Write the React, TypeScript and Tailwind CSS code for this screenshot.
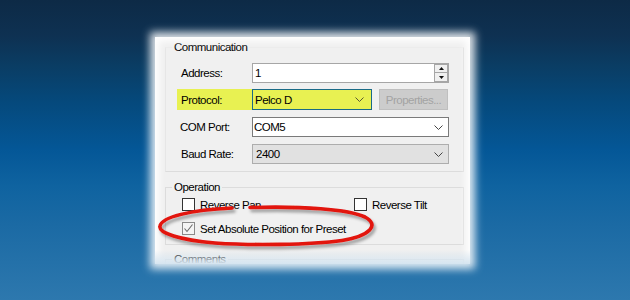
import React from "react";

function Chevron({ color = "#444" }: { color?: string }) {
  return (
    <svg width="9" height="5" viewBox="0 0 9 5" className="block">
      <polyline points="0.5,0.5 4.5,4.5 8.5,0.5" fill="none" stroke={color} strokeWidth="1" />
    </svg>
  );
}

function Check({ checked = false }: { checked?: boolean }) {
  return (
    <div
      className={
        checked
          ? "w-[13px] h-[13px] border border-[#8a8a8a] bg-[#f4f4f4] flex items-center justify-center"
          : "w-[13px] h-[13px] border border-[#333333] bg-white"
      }
    >
      {checked && (
        <svg width="11" height="11" viewBox="0 0 11 11" className="block">
          <polyline points="1.5,5.5 4,8.5 9.5,1.5" fill="none" stroke="#6a6a6a" strokeWidth="1.1" />
        </svg>
      )}
    </div>
  );
}

export default function App() {
  return (
    <div className="relative w-[630px] h-[300px] overflow-hidden bg-[linear-gradient(180deg,#0d2a46_0%,#0e3152_12%,#0a3d64_22%,#05497c_34%,#045797_50%,#0f63a0_62%,#1b6aa4_75%,#2d78ae_100%)] font-['Liberation_Sans',Arial,sans-serif] text-[11.5px] tracking-[-0.5px] text-black leading-[14px]">
      <div className="pt-[37px] pl-[155px]">
        <div className="relative w-[315px] h-[227px] bg-[#f0f0f0] shadow-[0_0_8px_5px_rgba(255,255,255,0.85)] overflow-hidden">
          <div className="pl-[10px] pt-[10px]">
            {/* Communication group */}
            <div className="relative w-[299px] border border-[#dcdcdc] border-t-[#ececec] border-l-[#e6e6e6] pt-[15px] pb-[7px] pl-[11px]">
              <div className="absolute left-[6px] top-[-8px] px-[2px] bg-[#f0f0f0]">Communication</div>

              <div className="flex items-center h-[20px]">
                <div className="w-[75px] pl-[4px]">Address:</div>
                <div className="w-[197px] h-[20px] border border-[#a6a6a6] bg-white flex items-center">
                  <div className="flex-1 pl-[2px]">1</div>
                  <div className="flex flex-col w-[14px] h-[18px]">
                    <div className="h-[9px] border border-[#a6a6a6] bg-[#f0f0f0] flex items-center justify-center">
                      <svg width="5" height="3" viewBox="0 0 5 3" className="block">
                        <polygon points="0,3 2.5,0 5,3" fill="#111" />
                      </svg>
                    </div>
                    <div className="h-[9px] border border-t-0 border-[#a6a6a6] bg-[#f0f0f0] flex items-center justify-center">
                      <svg width="5" height="3" viewBox="0 0 5 3" className="block">
                        <polygon points="0,0 2.5,3 5,0" fill="#111" />
                      </svg>
                    </div>
                  </div>
                </div>
              </div>

              <div className="flex items-center h-[21px] mt-[6px]">
                <div className="w-[75px] h-[21px] pl-[4px] bg-[#e8f152] flex items-center">Protocol:</div>
                <div className="w-[120px] h-[21px] border border-[#1a6b86] bg-[#e8f152] flex items-center justify-between pl-[2px] pr-[7px]">
                  <span>Pelco D</span>
                  <Chevron color="#5a5a30" />
                </div>
                <div className="ml-[7px] w-[69px] h-[21px] border border-[#bfbfbf] bg-[#cccccc] flex items-center justify-center text-[#a3a3a3]">
                  Properties...
                </div>
              </div>

              <div className="flex items-center h-[20px] mt-[7px]">
                <div className="w-[75px] pl-[3px]">COM Port:</div>
                <div className="w-[197px] h-[20px] border border-[#7a7a7a] bg-white flex items-center justify-between pl-[1px] pr-[5px]">
                  <span>COM5</span>
                  <Chevron />
                </div>
              </div>

              <div className="flex items-center h-[20px] mt-[7px]">
                <div className="w-[75px] pl-[4px]">Baud Rate:</div>
                <div className="w-[197px] h-[20px] border border-[#adadad] bg-[#e1e1e1] flex items-center justify-between pl-[3px] pr-[5px]">
                  <span>2400</span>
                  <Chevron />
                </div>
              </div>
            </div>

            {/* Operation group */}
            <div className="relative mt-[15px] w-[299px] border border-[#dcdcdc] pt-[10px] pb-[9px] pl-[16px]">
              <div className="absolute left-[6px] top-[-8px] px-[2px] bg-[#f0f0f0]">Operation</div>
              <div className="flex items-center h-[13px]">
                <div className="w-[172px] flex items-center gap-[5px]">
                  <Check />
                  <span>Reverse Pan</span>
                </div>
                <div className="flex items-center gap-[5px]">
                  <Check />
                  <span>Reverse Tilt</span>
                </div>
              </div>
              <div className="flex items-center h-[13px] mt-[11px] gap-[5px]">
                <Check checked />
                <span>Set Absolute Position for Preset</span>
              </div>
            </div>

            {/* Comments group */}
            <div className="relative mt-[14px] w-[299px] h-[40px] border border-[#dcdcdc]">
              <div className="absolute left-[6px] top-[-8px] px-[2px] bg-[#f0f0f0]">Comments</div>
            </div>
          </div>
          <div className="pointer-events-none absolute inset-0 shadow-[inset_0_0_7px_4px_rgba(255,255,255,0.95)]" />
          <div className="pointer-events-none absolute left-0 right-0 bottom-0 h-[14px] bg-[linear-gradient(180deg,rgba(255,255,255,0)_0%,rgba(200,220,235,0.75)_100%)]" />
        </div>
      </div>

      <svg
        className="pointer-events-none absolute left-0 top-0"
        width="630"
        height="300"
        viewBox="0 0 630 300"
      >
        <defs>
          <filter id="sh" x="-10%" y="-50%" width="120%" height="200%">
            <feDropShadow dx="2" dy="3" stdDeviation="1.6" floodColor="#000" floodOpacity="0.35" />
          </filter>
        </defs>
        <path
          d="M250 207.5 C 302 206, 348 209, 365 217 C 380 225, 370 236, 342 240.5 C 310 245, 250 245.5, 215 243 C 180 240, 158 233, 160 226 C 162 217, 190 210, 232 208"
          fill="none"
          stroke="#e2120f"
          strokeWidth="3.6"
          strokeLinecap="round"
          filter="url(#sh)"
        />
      </svg>
    </div>
  );
}
